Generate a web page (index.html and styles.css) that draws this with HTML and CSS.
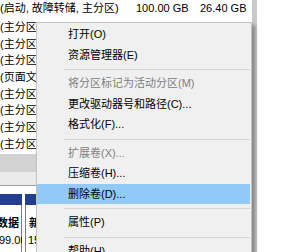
FILE: index.html
```html
<!DOCTYPE html>
<html lang="zh-CN">
<head>
    <meta charset="UTF-8">
    <meta name="viewport" content="width=device-width, initial-scale=1.0">
    <title>磁盘管理</title>
    <link rel="stylesheet" href="styles.css">
</head>
<body>

    <div class="screen">
        <div class="window">
            <div class="volume-list">
                <div class="row row-first">
                    <span class="col-status">(启动, 故障转储, 主分区)</span>
                    <span class="col-size">100.00 GB</span>
                    <span class="col-free">26.40 GB</span>
                </div>
                <div class="row">(主分区)</div>
                <div class="row">(主分区)</div>
                <div class="row">(主分区)</div>
                <div class="row">(页面文件, 主分区)</div>
                <div class="row">(主分区)</div>
                <div class="row">(主分区)</div>
                <div class="row">(主分区)</div>
                <div class="row">(主分区)</div>
            </div>

            <div class="scroll-track"></div>
            <div class="pane-gap"></div>

            <div class="disk-pane">
                <div class="part part-d">
                    <div class="part-bar"></div>
                    <div class="part-body">
                        <div class="part-name">数据 (D:)</div>
                        <div class="part-size">99.00 GB NTFS</div>
                    </div>
                </div>
                <div class="part part-e">
                    <div class="part-bar"></div>
                    <div class="part-body">
                        <div class="part-name">新加卷 (E:)</div>
                        <div class="part-size">150.00 GB NTFS</div>
                    </div>
                </div>
            </div>
        </div>

        <div class="frame"></div>

        <!-- context menu over the volume list -->
        <div class="context-menu">
            <div class="menu-item">打开(O)</div>
            <div class="menu-item">资源管理器(E)</div>
            <div class="menu-sep"></div>
            <div class="menu-item disabled">将分区标记为活动分区(M)</div>
            <div class="menu-item">更改驱动器号和路径(C)...</div>
            <div class="menu-item">格式化(F)...</div>
            <div class="menu-sep"></div>
            <div class="menu-item disabled">扩展卷(X)...</div>
            <div class="menu-item">压缩卷(H)...</div>
            <div class="menu-item active">删除卷(D)...</div>
            <div class="menu-sep"></div>
            <div class="menu-item">属性(P)</div>
            <div class="menu-sep"></div>
            <div class="menu-item">帮助(H)</div>
        </div>
    </div>

</body>
</html>
```

FILE: styles.css
```css
body {
    margin: 0;
    background-color: white;
    font-family: 'Liberation Sans', 'Noto Sans CJK SC', sans-serif;
    font-size: 11px;
    color: black;
}

.screen {
    position: relative;
    display: flex;
    width: 290px;
    height: 252px;
    overflow: hidden;
}

.window {
    width: 252px;
    flex: none;
    overflow: hidden;
    background-color: white;
}

.frame {
    width: 5px;
    flex: none;
    background-color: #c9c9c9;
}

.volume-list {
    white-space: nowrap;
}

/* rows are hidden by the menu past x=36 */
.row {
    width: 36px;
    height: 16.7px;
    line-height: 16.7px;
    overflow: hidden;
}

.row-first {
    display: flex;
    width: auto;
    height: 19px;
    line-height: 17px;
}

.col-status {
    width: 136px;
    flex: none;
}

.col-size {
    width: 64px;
    flex: none;
}

.scroll-track {
    height: 18px;
    margin-top: 1px;
    background-color: #d2d2d2;
}

.pane-gap {
    height: 13px;
    background-color: #ebebeb;
    border-bottom: 1px solid #9c9c9c;
}

.disk-pane {
    display: flex;
    gap: 3px;
    padding-top: 8px;
    white-space: nowrap;
}

.part {
    overflow: hidden;
    flex: none;
}

.part-d {
    width: 22px;
}

.part-e {
    width: 11px;
}

.part-bar {
    height: 11px;
    background-color: #243d8f;
}

.part-body {
    height: 60px;
    padding: 11px 0 0 3px;
    border: 1px solid #7c7c7c;
    border-top: none;
}

.part-d .part-body {
    padding-left: 0;
    text-indent: -3px;
    border-left: none;
}

.part-e .part-body {
    border-right: none;
}

.part-name {
    font-weight: bold;
    line-height: 14px;
}

.part-size {
    line-height: 14px;
    margin-top: 3px;
    text-indent: -1px;
}

.context-menu {
    position: absolute;
    left: 36px;
    top: 22px;
    width: 216px;
    height: 260px;
    box-sizing: border-box;
    padding-top: 1px;
    background-color: #f0f0f0;
    border: 1px solid #c4c4c4;
    box-shadow: 3px 3px 4px rgba(0, 0, 0, 0.35);
    white-space: nowrap;
    z-index: 1;
}

.menu-item {
    height: 20.5px;
    line-height: 20.5px;
    padding-left: 31px;
    margin-right: 1px;
}

.menu-item.disabled {
    color: #808080;
}

.menu-item.active {
    background-color: #91c9f7;
}

.menu-sep {
    height: 1px;
    margin: 4px 1px 3px 27px;
    background-color: #d5d5d5;
}
```
